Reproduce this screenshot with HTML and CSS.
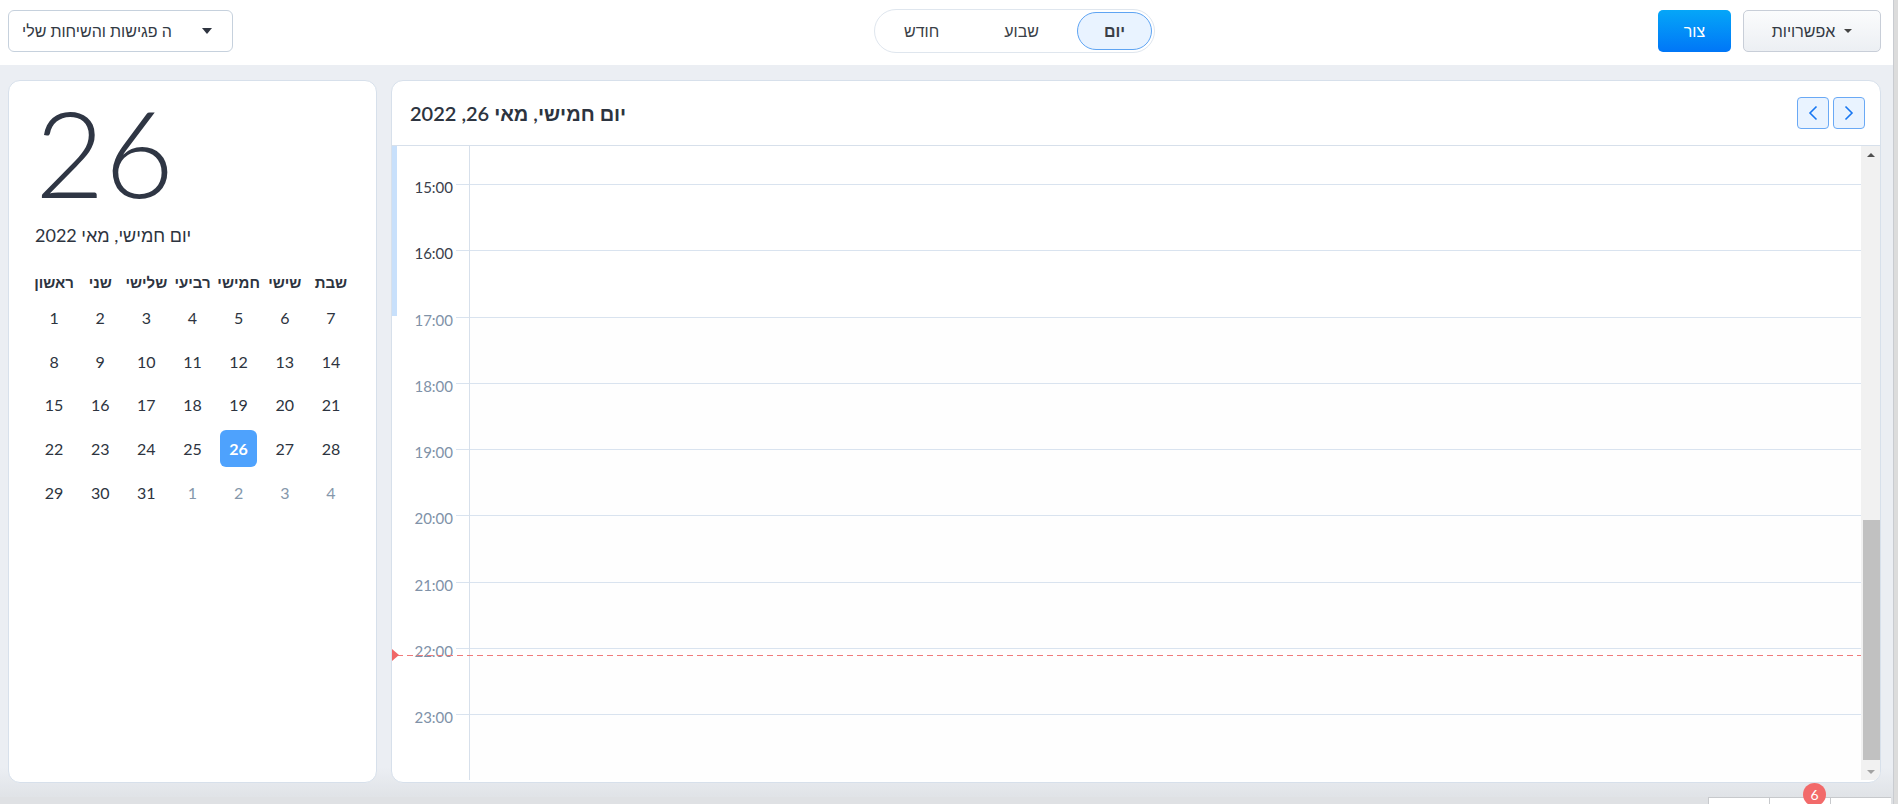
FILE: index.html
```html
<!DOCTYPE html>
<html lang="he">
<head>
<meta charset="utf-8">
<title>יומן</title>
<link rel="stylesheet" href="styles.css">
</head>
<body>
<div class="app">
  <header class="topbar">
    <button class="filter"><span class="filter-text">ה פגישות והשיחות שלי</span><span class="caret-solid"></span></button>
    <div class="views">
      <span class="view">חודש</span>
      <span class="view">שבוע</span>
      <span class="view active">יום</span>
    </div>
    <div class="actions">
      <button class="btn-create">צור</button>
      <button class="btn-options"><span>אפשרויות</span><span class="caret-small"></span></button>
    </div>
  </header>

  <main class="main">
    <aside class="card side">
      <div class="big-day">26</div>
      <div class="big-date" dir="rtl">יום חמישי, מאי 2022</div>
      <div class="mini">
        <div class="wd">ראשון</div><div class="wd">שני</div><div class="wd">שלישי</div><div class="wd">רביעי</div><div class="wd">חמישי</div><div class="wd">שישי</div><div class="wd">שבת</div>
        <div class="d">1</div><div class="d">2</div><div class="d">3</div><div class="d">4</div><div class="d">5</div><div class="d">6</div><div class="d">7</div>
        <div class="d">8</div><div class="d">9</div><div class="d">10</div><div class="d">11</div><div class="d">12</div><div class="d">13</div><div class="d">14</div>
        <div class="d">15</div><div class="d">16</div><div class="d">17</div><div class="d">18</div><div class="d">19</div><div class="d">20</div><div class="d">21</div>
        <div class="d">22</div><div class="d">23</div><div class="d">24</div><div class="d">25</div><div class="d"><span class="sel">26</span></div><div class="d">27</div><div class="d">28</div>
        <div class="d">29</div><div class="d">30</div><div class="d">31</div><div class="d other">1</div><div class="d other">2</div><div class="d other">3</div><div class="d other">4</div>
      </div>
    </aside>

    <section class="card daycard">
      <div class="day-head">
        <h1 class="day-title">יום חמישי, מאי 26, 2022</h1>
        <div class="nav">
          <button class="nav-btn" aria-label="prev"><svg width="12" height="16" viewBox="0 0 12 16"><path d="M9.5 1.5 L3 8 L9.5 14.5" fill="none" stroke="#1877f2" stroke-width="1.6"/></svg></button>
          <button class="nav-btn" aria-label="next"><svg width="12" height="16" viewBox="0 0 12 16"><path d="M2.5 1.5 L9 8 L2.5 14.5" fill="none" stroke="#1877f2" stroke-width="1.6"/></svg></button>
        </div>
      </div>
      <div class="day-body">
        <div class="rows">
          <div class="gutter">
            <div class="hl work"><span>15:00</span></div>
            <div class="hl work"><span>16:00</span></div>
            <div class="hl"><span>17:00</span></div>
            <div class="hl"><span>18:00</span></div>
            <div class="hl"><span>19:00</span></div>
            <div class="hl"><span>20:00</span></div>
            <div class="hl"><span>21:00</span></div>
            <div class="hl"><span>22:00</span></div>
            <div class="hl"><span>23:00</span></div>
          </div>
          <div class="slots">
            <div class="slot"></div>
            <div class="slot"></div>
            <div class="slot off"></div>
            <div class="slot off"></div>
            <div class="slot off"></div>
            <div class="slot off"></div>
            <div class="slot off"></div>
            <div class="slot off"></div>
            <div class="slot off"></div>
          </div>
          <div class="now"><span class="now-arrow"></span></div>
        </div>
        <div class="scrollbar">
          <div class="sb-btn"><span class="sb-up"></span></div>
          <div class="sb-track"><div class="sb-thumb"></div></div>
          <div class="sb-btn"><span class="sb-down"></span></div>
        </div>
      </div>
    </section>
  </main>

  <footer class="bottombar">
    <div class="cell"></div>
    <div class="cell"><span class="badge">6</span></div>
    <div class="cell"></div>
  </footer>
</div>
</body>
</html>
```

FILE: styles.css
```css
* { box-sizing: border-box; margin: 0; padding: 0; }

html, body {
  height: 804px;
  overflow: hidden;
}

body {
  font-family: Lato, "Liberation Sans", Arial, sans-serif;
  color: #2d3440;
  background: #dcdcdc;
}

.app {
  width: 1894px;
  height: 804px;
  border-right: 1px solid #c9ccd1;
  background: #ebeef3;
  display: flex;
  flex-direction: column;
}

/* ---------- top bar ---------- */
.topbar {
  height: 65px;
  flex: none;
  background: #fff;
  display: flex;
  align-items: flex-start;
  padding: 10px 12px 0 8px;
}

.filter {
  width: 225px;
  height: 42px;
  border: 1px solid #c6d1dd;
  border-radius: 6px;
  background: #fff;
  display: flex;
  align-items: center;
  justify-content: space-between;
  padding: 0 20px 0 13px;
  font: inherit;
  font-size: 16px;
  color: #333a44;
}

.caret-solid {
  width: 0;
  height: 0;
  border-left: 5px solid transparent;
  border-right: 5px solid transparent;
  border-top: 6px solid #2f3540;
}

.views {
  margin-left: 641px;
  margin-top: -1px;
  height: 44px;
  border: 1px solid #dfe6ee;
  border-radius: 23px;
  display: flex;
  gap: 11px;
  padding: 2px;
  background: #fff;
}

.view {
  height: 38px;
  display: flex;
  align-items: center;
  padding: 0 26px;
  font-size: 16px;
  color: #3a3f47;
  border: 1px solid transparent;
  border-radius: 19px;
}

.view.active {
  background: #e9f3ff;
  border-color: #5ea4f3;
  font-weight: 700;
}

.actions {
  margin-left: auto;
  display: flex;
  gap: 12px;
}

.btn-create {
  width: 73px;
  height: 42px;
  border: 0;
  border-radius: 5px;
  background: linear-gradient(#05a6f8, #0076f7);
  color: #fff;
  font: inherit;
  font-size: 16px;
}

.btn-options {
  width: 138px;
  height: 42px;
  border: 1px solid #c8ced8;
  border-radius: 5px;
  background: linear-gradient(#fbfcfd, #eceff3);
  display: flex;
  align-items: center;
  justify-content: center;
  gap: 9px;
  font: inherit;
  font-size: 16px;
  color: #333a44;
}

.caret-small {
  width: 0;
  height: 0;
  border-left: 4px solid transparent;
  border-right: 4px solid transparent;
  border-top: 4px solid #444;
}

/* ---------- main ---------- */
.main {
  flex: 1;
  min-height: 0;
  display: flex;
  gap: 14px;
  padding: 15px 12px 14px 8px;
  background: linear-gradient(to bottom, #ebeef3 0, #ebeef3 96%, #e0e3e7 100%);
}

.card {
  background: #fff;
  border: 1px solid #d7e0eb;
  border-radius: 12px;
}

/* left card */
.side {
  width: 369px;
  flex: none;
  padding: 11px 22px 0 22px;
}

.big-day {
  font-size: 120px;
  line-height: 120px;
  font-weight: 300;
  color: #2f3644;
  padding-left: 4px;
}

.big-date {
  margin-top: 12px;
  font-size: 18px;
  line-height: 22px;
  text-align: left;
  padding-left: 4px;
  color: #2d3440;
}

.mini {
  margin-top: 22px;
  display: grid;
  grid-template-columns: repeat(7, 1fr);
}

.wd {
  height: 28px;
  line-height: 28px;
  text-align: center;
  font-weight: 700;
  font-size: 15px;
  color: #2d3440;
}

.d {
  height: 43.6px;
  display: flex;
  align-items: center;
  justify-content: center;
  font-size: 16px;
  color: #2d3440;
}

.d.other { color: #8597ab; }

.sel {
  width: 37px;
  height: 37px;
  border-radius: 6px;
  background: #4ea2fd;
  color: #fff;
  font-weight: 700;
  display: flex;
  align-items: center;
  justify-content: center;
}

/* right card */
.daycard {
  flex: 1;
  min-width: 0;
  display: flex;
  flex-direction: column;
  padding-bottom: 2px;
  overflow: hidden;
}

.day-head {
  height: 65px;
  flex: none;
  border-bottom: 1px solid #d7e0eb;
  display: flex;
  align-items: center;
  justify-content: space-between;
  padding: 0 15px 0 18px;
}

.day-title {
  font-size: 20px;
  font-weight: 600;
  color: #2d3440;
}

.nav {
  display: flex;
  gap: 4px;
}

.nav-btn {
  width: 32px;
  height: 32px;
  border: 1px solid #6aa9f5;
  border-radius: 4px;
  background: #e9f3ff;
  display: flex;
  align-items: center;
  justify-content: center;
}

.day-body {
  flex: 1;
  min-height: 0;
  display: flex;
}

.rows {
  flex: 1;
  position: relative;
  display: flex;
  overflow: hidden;
}

.gutter {
  width: 78px;
  flex: none;
  border-right: 1px solid #d7e0eb;
  padding-top: 38px;
  background: linear-gradient(#c8e0fb, #c8e0fb) no-repeat 0 0 / 5px 170px;
}

.hl {
  height: 66.25px;
  display: flex;
  justify-content: flex-end;
  padding-right: 16px;
  background: linear-gradient(#d9e3ef, #d9e3ef) no-repeat right top / 13px 1px;
  font-size: 15px;
  color: #8092a8;
}

.hl.work { color: #3a404b; }

.hl span {
  margin-top: -6px;
  line-height: 18px;
  height: 18px;
}

.slots {
  flex: 1;
  padding-top: 38px;
}

.slot {
  height: 66.25px;
  border-top: 1px solid #d9e3ef;
}

.slot.off { background: #fefefe; }

.now {
  position: absolute;
  left: 0;
  right: 0;
  top: 509px;
  height: 1px;
  background: repeating-linear-gradient(to right, #f07b7b 0, #f07b7b 6px, transparent 6px, transparent 10px) 5px 0 / calc(100% - 5px) 1px no-repeat;
}

.now-arrow {
  position: absolute;
  left: 0;
  top: -6px;
  width: 0;
  height: 0;
  border-left: 7px solid #f06666;
  border-top: 6.5px solid transparent;
  border-bottom: 6.5px solid transparent;
}

.scrollbar {
  width: 19px;
  flex: none;
  background: #f1f1f1;
  display: flex;
  flex-direction: column;
}

.sb-btn {
  height: 17px;
  flex: none;
  display: flex;
  align-items: center;
  justify-content: center;
}

.sb-up {
  width: 0;
  height: 0;
  border-left: 4.5px solid transparent;
  border-right: 4.5px solid transparent;
  border-bottom: 4px solid #505050;
}

.sb-down {
  width: 0;
  height: 0;
  border-left: 4.5px solid transparent;
  border-right: 4.5px solid transparent;
  border-top: 4px solid #a3a3a3;
}

.sb-track {
  flex: 1;
}

.sb-thumb {
  margin: 357px 0 0 2px;
  width: 17px;
  height: 240px;
  background: #c1c1c1;
}

/* ---------- bottom bar ---------- */
.bottombar {
  height: 7px;
  flex: none;
  display: flex;
  justify-content: flex-end;
  padding-right: 2px;
  background: #dfe1e4;
}

.cell {
  width: 61px;
  background: #fff;
  border-left: 1px solid #c7c9cc;
  border-top: 1px solid #c7c9cc;
  position: relative;
}

.badge {
  position: absolute;
  left: 33px;
  top: -15px;
  width: 23px;
  height: 23px;
  border-radius: 50%;
  background: #f26a6a;
  color: #fff;
  font-size: 14px;
  line-height: 23px;
  text-align: center;
}
```
